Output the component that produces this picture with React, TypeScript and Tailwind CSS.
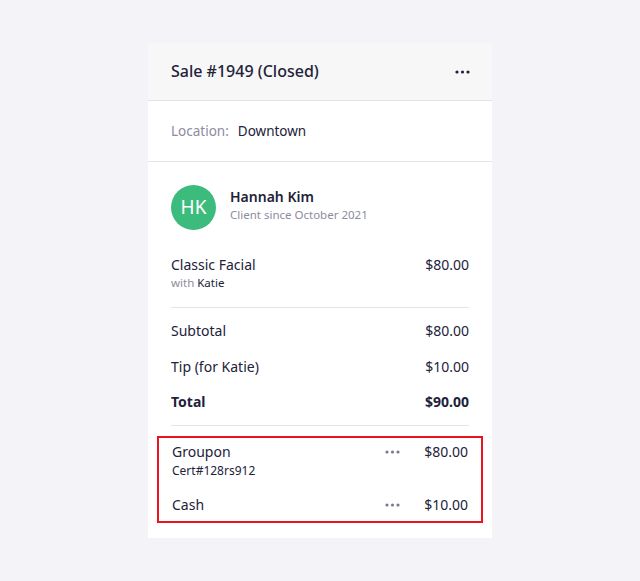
import React from 'react';

const Dots = ({ className = '' }: { className?: string }) => (
  <svg width="15" height="4" viewBox="0 0 15 4" className={className}>
    <circle cx="2" cy="2" r="1.6" fill="currentColor" />
    <circle cx="7.5" cy="2" r="1.6" fill="currentColor" />
    <circle cx="13" cy="2" r="1.6" fill="currentColor" />
  </svg>
);

const Row = ({ label, value, bold = false }: { label: string; value: string; bold?: boolean }) => (
  <div className={`h-[35.5px] flex items-center justify-between text-[14px] ${bold ? 'font-bold' : ''}`}>
    <span>{label}</span>
    <span>{value}</span>
  </div>
);

export default function App() {
  return (
    <div className="min-h-screen bg-[#f3f3f8] flex justify-center pt-[43px]" style={{ fontFamily: '"Noto Sans", "Open Sans", sans-serif' }}>
      <div className="w-[344px] h-[495px] bg-white text-[#22223a]">
        <div className="h-[58px] px-[23px] flex items-center justify-between bg-[#f7f7f7] border-b border-[#e4e4e8]">
          <h1 className="text-[16px] font-medium -mt-[2px]">Sale #1949 (Closed)</h1>
          <Dots className="text-[#22223a] mr-[-1px]" />
        </div>
        <div className="h-[61px] px-[23px] flex items-center border-b border-[#e4e4e8] text-[13.5px]">
          <span className="text-[#8c8ca0]">Location:</span>
          <span className="ml-[9px]">Downtown</span>
        </div>

        <div className="px-[23px] pt-[23px]">
          <div className="flex items-center">
            <div className="w-[45px] h-[45px] rounded-full bg-[#3cbc7c] text-white flex items-center justify-center text-[19px]">HK</div>
            <div className="ml-[14px] -mt-[3px]">
              <div className="text-[14px] font-semibold leading-[18px]">Hannah Kim</div>
              <div className="text-[11.5px] text-[#8c8ca0] leading-[18px]">Client since October 2021</div>
            </div>
          </div>

          <div className="mt-[26px] flex justify-between text-[14px]">
            <div>
              <div className="leading-[18px]">Classic Facial</div>
              <div className="text-[11.5px] leading-[18px]"><span className="text-[#8c8ca0]">with</span> Katie</div>
            </div>
            <div className="leading-[18px]">$80.00</div>
          </div>

          <div className="mt-[15px] border-t border-[#e4e4e8]" />
          <div className="py-[5px]">
            <Row label="Subtotal" value="$80.00" />
            <Row label="Tip (for Katie)" value="$10.00" />
            <Row label="Total" value="$90.00" bold />
          </div>
          <div className="border-t border-[#e4e4e8]" />
        </div>

        <div className="mx-[9px] mt-[10px] border-2 border-[#e8141e] px-[13px] pt-[4px] pb-[6px] text-[14px]">
          <div className="flex justify-between">
            <div>
              <div className="leading-[20px]">Groupon</div>
              <div className="text-[12px] leading-[18px]">Cert#128rs912</div>
            </div>
            <div className="flex items-start">
              <Dots className="text-[#7a7a8c] mt-[8px] mr-[24px]" />
              <span className="leading-[20px]">$80.00</span>
            </div>
          </div>
          <div className="flex justify-between mt-[15px]">
            <span className="leading-[20px]">Cash</span>
            <div className="flex items-start">
              <Dots className="text-[#7a7a8c] mt-[8px] mr-[24px]" />
              <span className="leading-[20px]">$10.00</span>
            </div>
          </div>
        </div>
      </div>
    </div>
  );
}
